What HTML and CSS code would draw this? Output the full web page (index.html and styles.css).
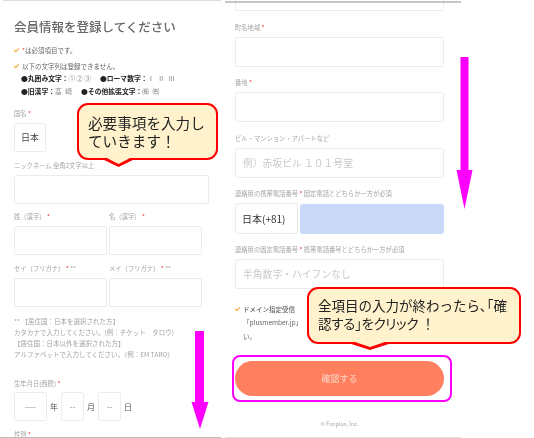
FILE: index.html
```html
<!DOCTYPE html>
<html lang="ja">
<head>
<meta charset="utf-8">
<title>会員情報を登録してください</title>
<link rel="stylesheet" href="styles.css">
</head>
<body>
<div class="stage">
  <section class="panel panel-left">
    <h1>会員情報を登録してください</h1>
    <div class="note-a"><span class="tick"></span><span class="req">*</span>は必須項目です。</div>
    <div class="note-b"><span class="tick"></span>以下の文字列は登録できません。</div>
    <div class="note-c"><b>●丸囲み文字：</b><span class="sym">①②③</span><b class="gap">●ローマ数字：</b><span class="sym">Ⅰ Ⅱ Ⅲ</span></div>
    <div class="note-c"><b>●旧漢字：</b><span class="sym">髙 﨑</span><b class="gap">●その他拡張文字：</b><span class="sym">㈱ ㈲</span></div>
    <label class="lab lab-country">国名 <span class="req">*</span></label>
    <div class="box box-country">日本</div>
    <label class="lab lab-nick">ニックネーム 全角2文字以上</label>
    <div class="box box-wide"></div>
    <div class="row row-name">
      <div class="col"><label class="lab">姓（漢字） <span class="req">*</span></label><div class="box"></div></div>
      <div class="col"><label class="lab">名（漢字） <span class="req">*</span></label><div class="box"></div></div>
    </div>
    <div class="row row-kana">
      <div class="col"><label class="lab">セイ（フリガナ） <span class="req">*</span> **</label><div class="box"></div></div>
      <div class="col"><label class="lab">メイ（フリガナ） <span class="req">*</span> **</label><div class="box"></div></div>
    </div>
    <p class="kana-note">** 【居住国：日本を選択された方】<br>カタカナで入力してください。(例：チケット　タロウ)<br> 【居住国：日本以外を選択された方】<br>アルファベットで入力してください。（例：EM TARO）</p>
    <label class="lab lab-birth">生年月日(西暦) <span class="req">*</span></label>
    <div class="birth">
      <div class="box b-year">----</div><span>年</span>
      <div class="box b-small">--</div><span>月</span>
      <div class="box b-small">--</div><span>日</span>
    </div>
    <label class="lab lab-sex">性別 <span class="req">*</span></label>
  </section>

  <section class="panel panel-right">
    <div class="box box-cut"></div>
    <label class="lab lab-r1">町名地域 <span class="req">*</span></label>
    <div class="box box-r"></div>
    <label class="lab lab-r2">番地 <span class="req">*</span></label>
    <div class="box box-r"></div>
    <label class="lab lab-r4">ビル・マンション・アパートなど</label>
    <div class="box box-r hint">例）赤坂ビル １０１号室</div>
    <label class="lab lab-r2">連絡用の携帯電話番号 <span class="req">*</span> 固定電話とどちらか一方が必須</label>
    <div class="phone">
      <div class="box box-code">日本(+81)</div>
      <div class="box-blue"></div>
    </div>
    <label class="lab lab-r2">連絡用の固定電話番号 <span class="req">*</span> 携帯電話番号とどちらか一方が必須</label>
    <div class="box box-r hint">半角数字・ハイフンなし</div>
    <div class="domain"><span class="tick"></span><b>ドメイン指定受信</b><br>「plusmember.jp」</div>
    <div class="domain-end">い。</div>
    <div class="submit">確認する</div>
    <div class="copy">© Fanplus, Inc.</div>
  </section>

  <div class="bubble bubble-one">必要事項を入力し<br>ていきます！</div>
  <div class="bubble bubble-two">全項目の入力が終わったら､｢確<br><span class="tight">認する｣をクリック</span>！</div>
  <div class="focus"></div>
  <svg class="arrow arrow-one" viewBox="0 0 18 98"><path d="M4 0H13V71H17.500L9 98L.5 71H4Z"/></svg>
  <svg class="arrow arrow-two" viewBox="0 0 17 152"><path d="M4.500 0H12.500V113H16.500L8.500 152L.5 113H4.500Z"/></svg>
</div>
</body>
</html>
```
FILE: styles.css
```css
* { box-sizing: border-box; }
html, body { margin: 0; padding: 0; background: #fff; }
body { font-family: "Noto Sans CJK JP", "Noto Sans", sans-serif; color: #555; }
.stage { position: relative; width: 534px; height: 438px; overflow: hidden; }

.panel { position: absolute; top: 0; height: 438px; overflow: hidden; filter: blur(.45px); }
.panel-left { left: 0; width: 221px; padding: 18px 0 0 14px; border-bottom: 1px solid #bbb; }
.panel-left::before { content: ""; position: absolute; top: 0; left: 3px; right: 0; height: 1px; background: #ddd; }
.panel-right { left: 225px; width: 236px; padding: 0 0 0 10px; }
.panel-right::before { content: ""; position: absolute; top: 1px; left: 0; right: 0; height: 2px; background: #c4c8c4; }
.panel-right::after { content: ""; position: absolute; bottom: 0; left: 0; right: 0; height: 1px; background: #ddd; }

h1 { margin: 0; font-size: 12.500px; line-height: 18px; font-weight: 500; color: #666; white-space: nowrap; }
.req { color: #e33; }
.tick { display: inline-block; width: 5px; height: 3px; margin: 0 3px 2px -7px; border-left: 1.500px solid #f0a830; border-bottom: 1.500px solid #f0a830; transform: rotate(-45deg); }
.note-a, .note-b, .note-c { font-size: 6.500px; line-height: 12px; padding-left: 7px; white-space: nowrap; color: #666; }
.note-a { margin-top: 8px; }
.note-b { margin-top: 4px; }
.note-c { font-size: 6.800px; line-height: 12.500px; color: #888; }
.note-c b { color: #222; }
.sym { letter-spacing: 1px; }
.gap { margin-left: 8px; }

.lab { display: block; font-size: 6.300px; line-height: 10px; height: 10px; color: #a4a4a4; white-space: nowrap; }
.box { height: 29px; border: 1px solid #ececec; border-radius: 2px; background: #fff; }
.lab-country { margin-top: 12px; }
.box-country { width: 32px; margin-top: 4px; font-size: 9px; line-height: 27px; text-align: center; color: #444; }
.lab-nick { margin-top: 9px; }
.box-wide { width: 195px; margin-top: 4px; }
.row { display: flex; gap: 2px; }
.row .col { width: 93px; }
.row .box { margin-top: 4px; }
.row-name { margin-top: 8px; }
.row-kana { margin-top: 9px; }
.kana-note { margin: 8.500px 0 0; font-size: 6.500px; line-height: 11.300px; color: #a4a4a4; white-space: nowrap; }
.lab-birth { margin-top: 18px; }
.birth { display: flex; align-items: center; margin-top: 3px; font-size: 8px; color: #555; }
.birth span { width: 14px; text-align: center; }
.birth .box { line-height: 27px; text-align: center; color: #888; }
.b-year { width: 33px; }
.b-small { width: 23px; }
.lab-sex { margin-top: 9px; }

.box-cut { width: 209px; height: 13px; margin-top: -2px; }
.box-r { width: 209px; height: 30px; }
.hint { font-size: 9.800px; line-height: 28px; padding-left: 7px; color: #c8c8c8; }
.lab-r1 { margin-top: 12px; margin-bottom: 4px; }
.lab-r2 { margin-top: 11px; margin-bottom: 4px; }
.lab-r4 { margin-top: 12px; margin-bottom: 4px; }
.phone { display: flex; gap: 2px; width: 209px; }
.box-code { width: 63px; height: 31px; font-size: 10px; line-height: 29px; padding-left: 6px; color: #333; }
.box-blue { flex: 1; height: 30px; margin-top: 1px; border-radius: 3px; background: #c9d9f7; }
.domain { margin-top: 13.500px; padding-left: 8px; font-size: 6.500px; line-height: 13.500px; color: #666; white-space: nowrap; width: 209px; }
.domain .tick { margin-left: -8px; }
.domain b { color: #666; font-weight: 500; }
.domain-end { padding-left: 8px; font-size: 6.500px; line-height: 13.500px; color: #666; }
.submit { width: 209px; height: 35px; margin-top: 18px; border-radius: 18px; background: #ff7f5f; color: #ffd9cd; font-size: 9px; line-height: 35px; text-align: center; }
.copy { margin-top: 24px; width: 209px; text-align: center; font-size: 5.500px; line-height: 8px; color: #aaa; }

.bubble { position: absolute; background: #fff2cc; border: 2px solid #f00; border-radius: 11px; color: #222; font-family: "Noto Sans CJK JP", sans-serif; white-space: nowrap; filter: blur(.3px); }
.bubble::before, .bubble::after { content: ""; position: absolute; clip-path: polygon(0 0, 100% 0, 50% 100%); }
.bubble::before { background: #f00; }
.bubble::after { background: #fff2cc; }
.bubble-one { left: 77px; top: 103px; width: 141px; height: 57px; padding: 9px 0 0 9px; font-size: 14.600px; line-height: 18px; }
.bubble-one::before { left: 21px; bottom: -9px; width: 37px; height: 9px; }
.bubble-one::after { left: 24px; bottom: -6px; width: 31px; height: 8px; }
.bubble-two { left: 307px; top: 287px; width: 214px; height: 57px; padding: 8px 0 0 9px; font-size: 13.500px; line-height: 17.500px; }
.tight { font-feature-settings: "palt"; letter-spacing: -.3px; margin-right: 3px; }
.bubble-two::before { left: 36px; bottom: -8px; width: 50px; height: 8px; }
.bubble-two::after { left: 40px; bottom: -5px; width: 42px; height: 7px; }
.focus { position: absolute; left: 232px; top: 355px; width: 220px; height: 47px; border: 2px solid #f0f; border-radius: 8px; }
.arrow { position: absolute; fill: #f0f; }
.arrow-one { left: 191px; top: 331px; width: 18px; height: 98px; }
.arrow-two { left: 456px; top: 57px; width: 17px; height: 152px; }
```
